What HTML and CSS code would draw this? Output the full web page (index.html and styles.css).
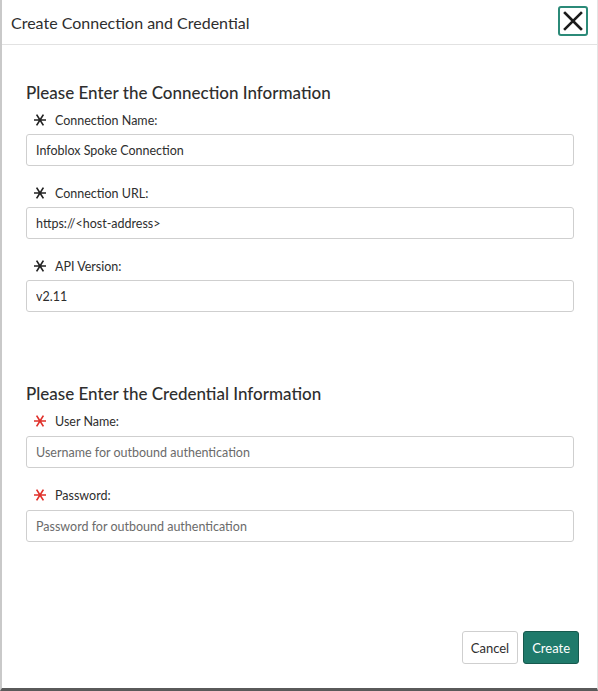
FILE: index.html
```html
<!DOCTYPE html>
<html lang="en">
<head>
    <meta charset="UTF-8">
    <meta name="viewport" content="width=device-width, initial-scale=1.0">
    <title>Create Connection and Credential</title>
    <link rel="stylesheet" href="styles.css">
</head>
<body>
    <div class="modal">
        <header class="modal-header">
            <h1 class="modal-title">Create Connection and Credential</h1>
            <button type="button" class="close-btn" aria-label="Close">
                <svg width="20" height="20" viewBox="0 0 20 20">
                    <path d="M2 2 L18 18 M18 2 L2 18" stroke="#1b1b1b" stroke-width="2.6" stroke-linecap="square"/>
                </svg>
            </button>
        </header>

        <div class="modal-body">
            <section class="form-section">
                <h2>Please Enter the Connection Information</h2>

                <div class="form-group">
                    <label><svg class="req" viewBox="0 0 12 12"><path d="M0 6 H12 M2.6 0.6 L9.4 11.4 M9.4 0.6 L2.6 11.4"/></svg>Connection Name:</label>
                    <input type="text" value="Infoblox Spoke Connection">
                </div>

                <div class="form-group">
                    <label><svg class="req" viewBox="0 0 12 12"><path d="M0 6 H12 M2.6 0.6 L9.4 11.4 M9.4 0.6 L2.6 11.4"/></svg>Connection URL:</label>
                    <input type="text" value="https://<host-address>">
                </div>

                <div class="form-group">
                    <label><svg class="req" viewBox="0 0 12 12"><path d="M0 6 H12 M2.6 0.6 L9.4 11.4 M9.4 0.6 L2.6 11.4"/></svg>API Version:</label>
                    <input type="text" value="v2.11">
                </div>
            </section>

            <section class="form-section credentials">
                <h2>Please Enter the Credential Information</h2>

                <div class="form-group">
                    <label><svg class="req red" viewBox="0 0 12 12"><path d="M0 6 H12 M2.6 0.6 L9.4 11.4 M9.4 0.6 L2.6 11.4"/></svg>User Name:</label>
                    <input type="text" placeholder="Username for outbound authentication">
                </div>

                <div class="form-group">
                    <label><svg class="req red" viewBox="0 0 12 12"><path d="M0 6 H12 M2.6 0.6 L9.4 11.4 M9.4 0.6 L2.6 11.4"/></svg>Password:</label>
                    <input type="password" placeholder="Password for outbound authentication">
                </div>
            </section>
        </div>

        <footer class="modal-footer">
            <button type="button" class="btn btn-default">Cancel</button>
            <button type="button" class="btn btn-primary">Create</button>
        </footer>
    </div>
</body>
</html>
```

FILE: styles.css
```css
* {
    margin: 0;
    padding: 0;
    box-sizing: border-box;
    font-family: Lato, "Open Sans", Arial, sans-serif;
}

body {
    background-color: #fff;
    width: 598px;
    height: 691px;
    overflow: hidden;
}

.modal {
    height: 691px;
    border-left: 2px solid #c9c9c9;
    border-right: 1px solid #e4e4e4;
    border-bottom: 3px solid #5a5a5a;
    display: flex;
    flex-direction: column;
}

.modal-header {
    height: 45px;
    display: flex;
    align-items: center;
    justify-content: space-between;
    padding: 0 9px 0 9px;
    border-bottom: 1px solid #e2e2e2;
}

.modal-title {
    font-size: 16px;
    font-weight: 400;
    color: #2e2e2e;
}

.close-btn {
    width: 30px;
    height: 30px;
    border: 2px solid #2b8a78;
    border-radius: 3px;
    background: #fff;
    display: flex;
    align-items: center;
    justify-content: center;
    margin-top: -2px;
    cursor: pointer;
}

.modal-body {
    flex: 1;
    padding: 37px 23px 0 24px;
}

.form-section h2 {
    font-size: 17px;
    font-weight: 500;
    color: #2e2e2e;
    margin-bottom: 6px;
    line-height: 22px;
}

.credentials {
    margin-top: 71px;
}

.form-group {
    margin-bottom: 17px;
}

.form-group label {
    display: flex;
    align-items: center;
    height: 20px;
    font-size: 12.5px;
    color: #2e2e2e;
    margin-bottom: 4px;
    padding-left: 8px;
}

.credentials .form-group label {
    margin-bottom: 5px;
}

.req {
    width: 12px;
    height: 12px;
    margin-right: 9px;
    stroke: #222;
    stroke-width: 1.7;
    fill: none;
}

.req.red {
    stroke: #e0302a;
}

.form-group input {
    width: 100%;
    height: 32px;
    padding: 0 9px;
    border: 1px solid #cfcfcf;
    border-radius: 3px;
    font-size: 12.5px;
    color: #2e2e2e;
}

.form-group input::placeholder {
    color: #6b6b6b;
}

.modal-footer {
    display: flex;
    justify-content: flex-end;
    gap: 5px;
    padding: 0 18px 24px 0;
}

.btn {
    height: 33px;
    padding: 0 8px;
    font-size: 13px;
    border-radius: 3px;
    cursor: pointer;
}

.btn-default {
    background: #fff;
    border: 1px solid #cfcfcf;
    color: #2e2e2e;
}

.btn-primary {
    background: #1f7a6b;
    border: 1px solid #16594e;
    color: #fff;
}
```
